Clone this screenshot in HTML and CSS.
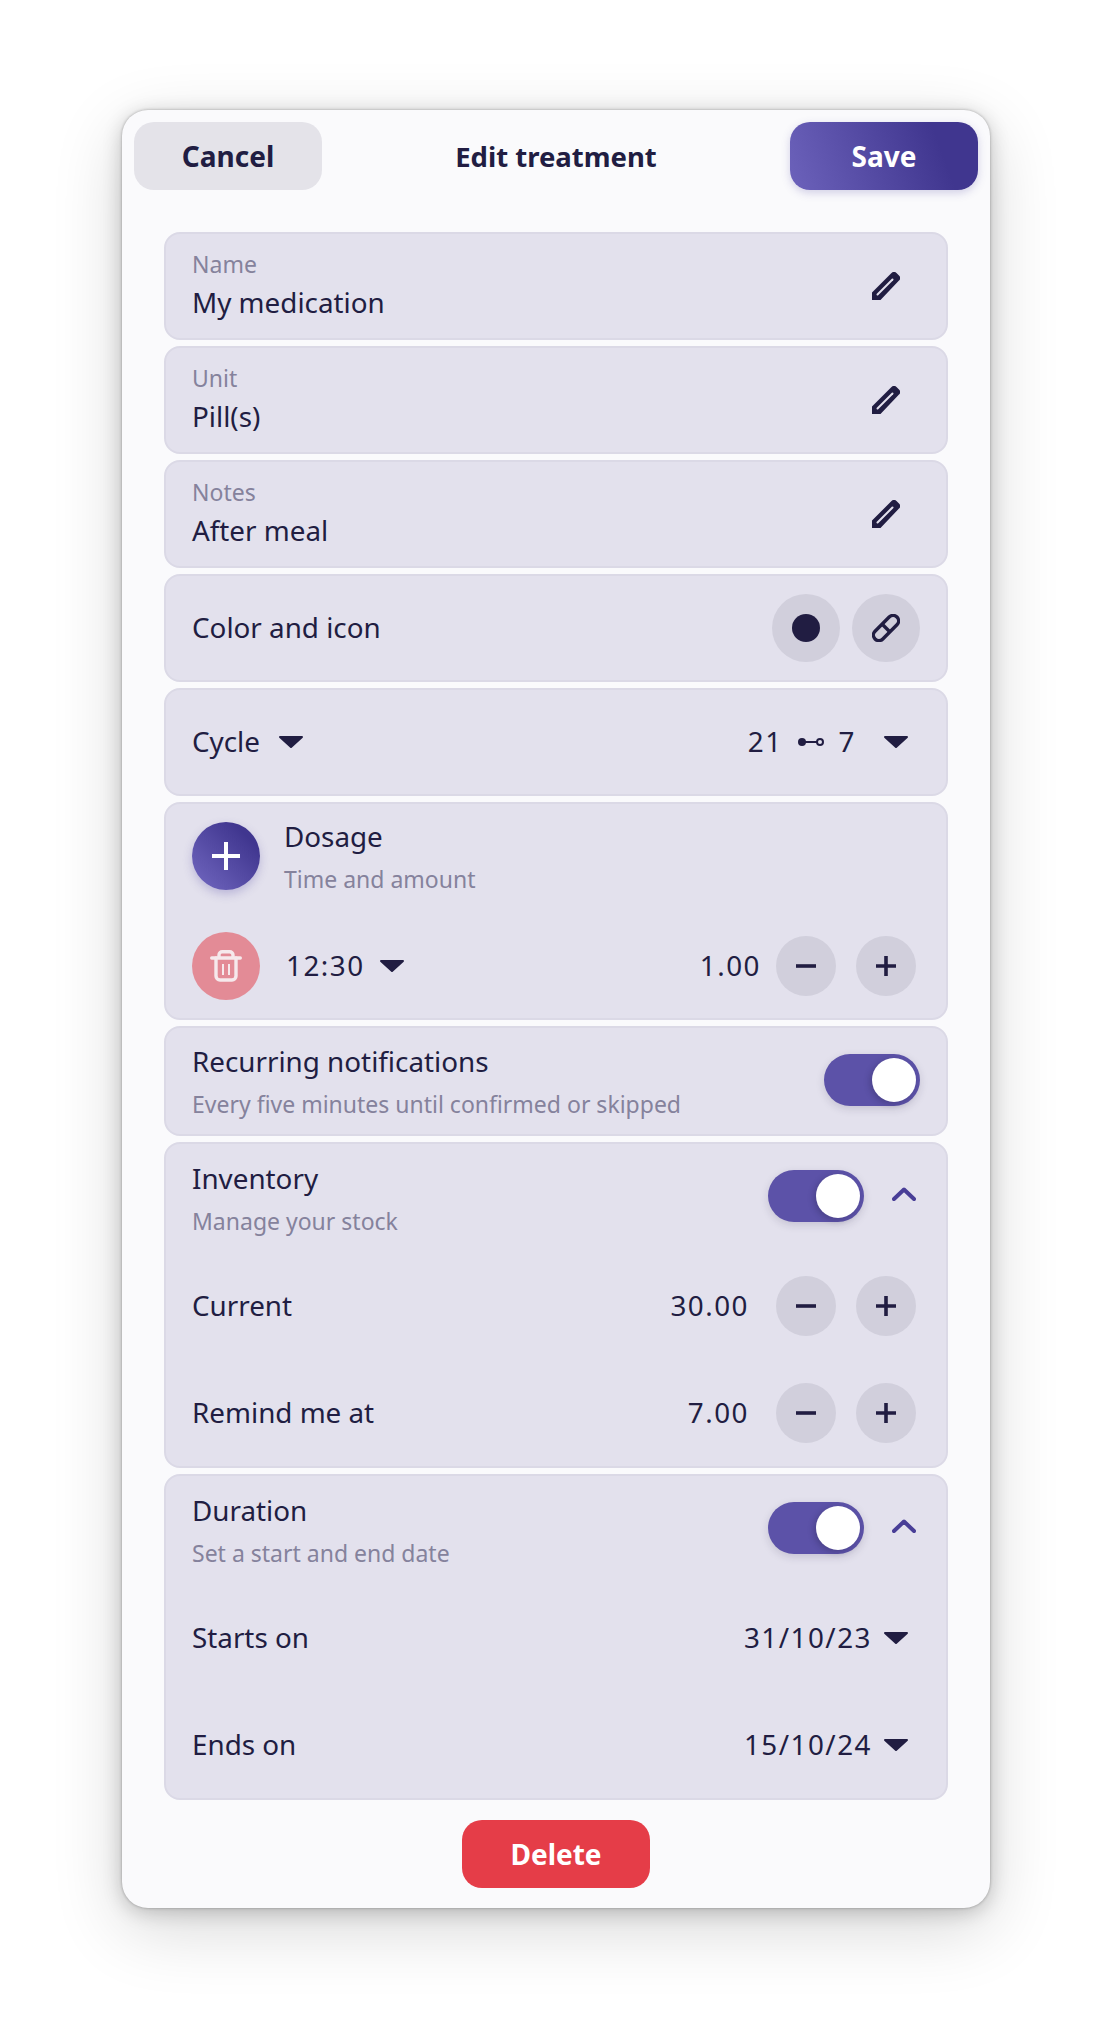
FILE: index.html
```html
<!DOCTYPE html>
<html lang="en">
<head>
  <meta charset="UTF-8" />
  <meta name="viewport" content="width=device-width, initial-scale=1.0" />
  <title>Edit treatment</title>
  <link rel="stylesheet" href="styles.css">
</head>
<body>
  <svg class="defs" width="0" height="0">
    <symbol id="pencil" viewBox="0 0 28 28">
      <path fill="#211d42" d="M0 20.5 19.5 1a3.5 3.5 0 0 1 5 0L27 3.5a3.5 3.5 0 0 1 0 5L8.5 28H0Z"/>
      <path stroke="#e3e1ed" stroke-width="2" stroke-linecap="round" d="M5.5 22.5 20.5 7.5"/>
    </symbol>
    <symbol id="caret" viewBox="0 0 24 12">
      <path fill="#211d42" d="M1 0h22a1 1 0 0 1 .7 1.700L13 11.600a1.400 1.400 0 0 1-2 0L.3 1.700A1 1 0 0 1 1 0Z"/>
    </symbol>
    <symbol id="minus" viewBox="0 0 20 20">
      <path stroke="#211d42" stroke-width="3.600" d="M0 10H20"/>
    </symbol>
    <symbol id="plus" viewBox="0 0 20 20">
      <path stroke="#211d42" stroke-width="3.600" d="M0 10H20M10 0V20"/>
    </symbol>
    <symbol id="chevron" viewBox="0 0 24 14">
      <path fill="none" stroke="#493e97" stroke-width="4" stroke-linecap="round" stroke-linejoin="round" d="M2 12 12 2.500 22 12"/>
    </symbol>
  </svg>

  <div class="card">
    <div class="topbar">
      <button class="btn btn-cancel">Cancel</button>
      <h1>Edit treatment</h1>
      <button class="btn btn-save">Save</button>
    </div>

    <div class="section">
      <div class="row row-short">
        <div class="field">
          <div class="label">Name</div>
          <div class="value">My medication</div>
        </div>
        <svg class="pencil"><use href="#pencil"/></svg>
      </div>
    </div>
    <div class="section">
      <div class="row row-short">
        <div class="field">
          <div class="label">Unit</div>
          <div class="value">Pill(s)</div>
        </div>
        <svg class="pencil"><use href="#pencil"/></svg>
      </div>
    </div>
    <div class="section">
      <div class="row row-short">
        <div class="field">
          <div class="label">Notes</div>
          <div class="value">After meal</div>
        </div>
        <svg class="pencil"><use href="#pencil"/></svg>
      </div>
    </div>

    <div class="section">
      <div class="row row-short">
        <div class="value">Color and icon</div>
        <div class="swatches">
          <div class="round round-lg"><span class="dot"></span></div>
          <div class="round round-lg">
            <svg width="28" height="28" viewBox="0 0 28 28" fill="none" stroke="#211d42" stroke-width="3.400">
              <rect x="-1.500" y="8.500" width="31" height="11" rx="5.500" transform="rotate(-45 14 14)"/>
              <path d="M10 10 18 18"/>
            </svg>
          </div>
        </div>
      </div>
    </div>

    <div class="section">
      <div class="row row-short">
        <div class="inline">
          <div class="value">Cycle</div>
          <svg class="caret caret-cycle"><use href="#caret"/></svg>
        </div>
        <div class="inline cycle">
          <div class="value num">21</div>
          <svg class="cycle-link" width="26" height="10" viewBox="0 0 26 10">
            <circle cx="4" cy="5" r="4" fill="#211d42"/>
            <path d="M7 5H19" stroke="#211d42" stroke-width="2"/>
            <circle cx="22" cy="5" r="3" fill="none" stroke="#211d42" stroke-width="2"/>
          </svg>
          <div class="value num">7</div>
          <svg class="caret caret-end"><use href="#caret"/></svg>
        </div>
      </div>
    </div>

    <div class="section">
      <div class="row row-dose-head">
        <div class="inline">
          <div class="round round-lg round-add">
            <svg width="28" height="28" viewBox="0 0 28 28"><path stroke="#fff" stroke-width="4" d="M0 14H28M14 0V28"/></svg>
          </div>
          <div class="field field-side">
            <div class="value">Dosage</div>
            <div class="sub">Time and amount</div>
          </div>
        </div>
      </div>
      <div class="row row-dose">
        <div class="inline">
          <div class="round round-lg round-delete">
            <svg width="32" height="32" viewBox="0 0 32 32" fill="none" stroke="#f6e9ec" stroke-width="3.400" stroke-linecap="round" stroke-linejoin="round">
              <path d="M1.700 8H30.300M9 7V5A3.300 3.300 0 0 1 12.300 1.700H19.700A3.300 3.300 0 0 1 23 5V7"/>
              <path d="M6 8V26A4 4 0 0 0 10 30H22A4 4 0 0 0 26 26V8"/>
              <path stroke-width="2" stroke-linecap="butt" d="M13 14V25M19 14V25"/>
            </svg>
          </div>
          <div class="value num time">12:30</div>
          <svg class="caret"><use href="#caret"/></svg>
        </div>
        <div class="stepper">
          <div class="value num amount">1.00</div>
          <div class="round"><svg width="20" height="20"><use href="#minus"/></svg></div>
          <div class="round"><svg width="20" height="20"><use href="#plus"/></svg></div>
        </div>
      </div>
    </div>

    <div class="section">
      <div class="row row-mid">
        <div class="field">
          <div class="value">Recurring notifications</div>
          <div class="sub">Every five minutes until confirmed or skipped</div>
        </div>
        <div class="toggle toggle-solo"><span class="thumb"></span></div>
      </div>
    </div>

    <div class="section">
      <div class="row row-head">
        <div class="field">
          <div class="value">Inventory</div>
          <div class="sub">Manage your stock</div>
        </div>
        <div class="head-controls">
          <div class="toggle"><span class="thumb"></span></div>
          <svg class="chevron"><use href="#chevron"/></svg>
        </div>
      </div>
      <div class="row">
        <div class="value">Current</div>
        <div class="stepper">
          <div class="value num stock">30.00</div>
          <div class="round"><svg width="20" height="20"><use href="#minus"/></svg></div>
          <div class="round"><svg width="20" height="20"><use href="#plus"/></svg></div>
        </div>
      </div>
      <div class="row">
        <div class="value">Remind me at</div>
        <div class="stepper">
          <div class="value num stock">7.00</div>
          <div class="round"><svg width="20" height="20"><use href="#minus"/></svg></div>
          <div class="round"><svg width="20" height="20"><use href="#plus"/></svg></div>
        </div>
      </div>
    </div>

    <div class="section">
      <div class="row row-head">
        <div class="field">
          <div class="value">Duration</div>
          <div class="sub">Set a start and end date</div>
        </div>
        <div class="head-controls">
          <div class="toggle"><span class="thumb"></span></div>
          <svg class="chevron"><use href="#chevron"/></svg>
        </div>
      </div>
      <div class="row">
        <div class="value">Starts on</div>
        <div class="inline">
          <div class="value num">31/10/23</div>
          <svg class="caret caret-date"><use href="#caret"/></svg>
        </div>
      </div>
      <div class="row">
        <div class="value">Ends on</div>
        <div class="inline">
          <div class="value num">15/10/24</div>
          <svg class="caret caret-date"><use href="#caret"/></svg>
        </div>
      </div>
    </div>

    <div class="bottom">
      <button class="btn btn-delete">Delete</button>
    </div>
  </div>
</body>
</html>
```
FILE: styles.css
```css
* { box-sizing: border-box; }
body { margin: 0; padding: 110px 122px 134px; background: #fff; font-family: "Noto Sans", sans-serif; color: #211d42; }
.defs { position: absolute; }

.card { height: 1798px; padding: 12px 12px 20px; background: #fafafc; border-radius: 26px; box-shadow: 0 0 3px rgba(0,0,0,.3), 0 4px 20px rgba(0,0,0,.2), 0 20px 70px rgba(0,0,0,.16); }
.topbar { display: flex; justify-content: space-between; align-items: center; margin-bottom: 42px; }
h1 { margin: 0; font-size: 27.500px; font-weight: 700; }

.btn { width: 188px; height: 68px; border: 0; border-radius: 20px; font-family: inherit; font-size: 28px; font-weight: 700; }
.btn-cancel { background: #e4e3e9; color: #211d42; }
.btn-save { background: linear-gradient(70deg, #6c62bb 0%, #40368f 78%); color: #fff; box-shadow: 0 3px 8px rgba(92,82,168,.25); }
.btn-delete { background: #e53d48; color: #fff; }
.bottom { display: flex; justify-content: center; margin-top: 20px; }

.section { margin: 0 30px 6px; background: #e3e1ed; border: 2px solid #dbd9e6; border-radius: 16px; }
.section:nth-last-child(2) { margin-bottom: 0; }
.row { display: flex; justify-content: space-between; align-items: center; height: 107px; padding: 0 26px; }
.row-short { height: 104px; }
.row-mid { height: 106px; }
.row-head { height: 108px; }
.row-dose-head { height: 104px; }
.row-dose { height: 110px; padding-top: 6px; }

.label { margin-bottom: 5px; font-size: 23px; line-height: 30px; color: #85829c; }
.value { padding-bottom: 2px; font-size: 27.800px; line-height: 36px; }
.num { letter-spacing: 1.500px; }
.sub { margin: 5px 0 -5px; font-size: 23px; line-height: 36px; color: #85829c; }
.field { margin-top: -2px; }
.field-side { margin-left: 24px; }
.inline { display: flex; align-items: center; }

.pencil { width: 28px; height: 28px; margin-right: 20px; }
.caret { width: 24px; height: 12px; margin-left: 15px; }
.caret-cycle { margin-left: 19px; }
.caret-date { margin-right: 12px; margin-left: 12px; }
.caret-end { margin-left: 28px; margin-right: 12px; }
.cycle-link { margin: 0 15px; }

.swatches { display: flex; gap: 12px; }
.round { display: flex; justify-content: center; align-items: center; width: 60px; height: 60px; border-radius: 50%; background: #d1cfdc; }
.round-lg { width: 68px; height: 68px; }
.round-add { background: linear-gradient(45deg, #6c62bb 10%, #40368f 80%); box-shadow: 0 4px 10px rgba(92,82,168,.3); }
.round-delete { background: #e38b96; }
.dot { width: 28px; height: 28px; border-radius: 50%; background: #211d42; }
.time { margin-left: 26px; }

.stepper { display: flex; align-items: center; gap: 20px; margin-right: 4px; }
.amount { margin-right: -5px; }
.stock { margin-right: 7px; }

.toggle { display: flex; justify-content: flex-end; align-items: center; width: 96px; height: 52px; padding: 4px; border-radius: 26px; background: #5c52a8; box-shadow: 0 3px 8px rgba(33,29,66,.15); }
.toggle-solo { margin-top: -2px; }
.thumb { width: 44px; height: 44px; border-radius: 50%; background: #fff; box-shadow: -2px 2px 6px rgba(33,29,66,.3); }
.head-controls { display: flex; align-items: center; gap: 28px; margin-top: -4px; margin-right: 4px; }
.chevron { width: 24px; height: 14px; margin-top: -4px; }
```
